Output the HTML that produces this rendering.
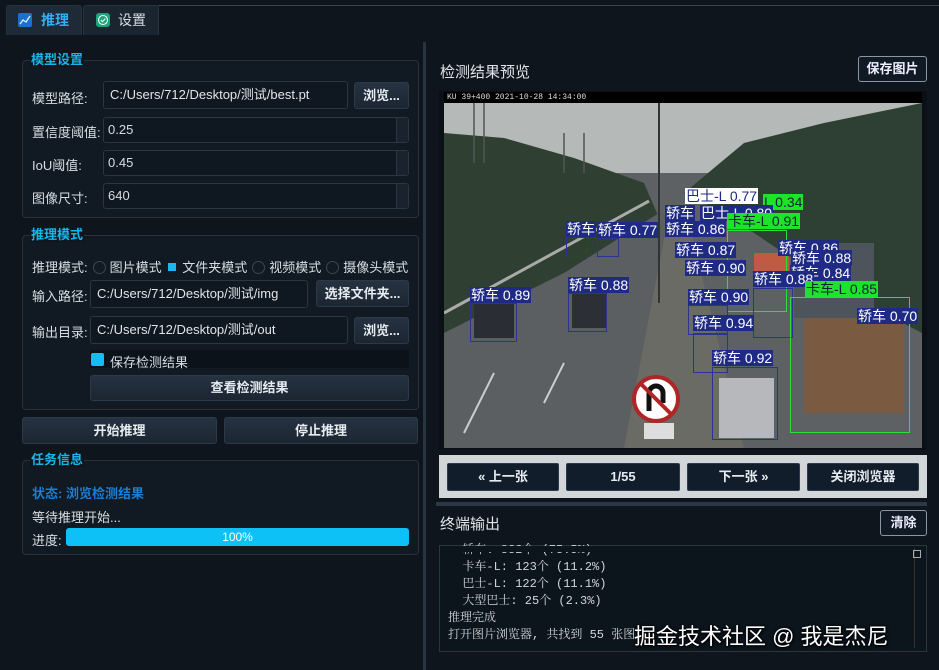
<!DOCTYPE html><html><head><meta charset="utf-8"><style>
*{box-sizing:border-box;margin:0;padding:0}
body{width:939px;height:670px;background:#0e151d;font-family:"Liberation Sans","Noto Sans CJK SC",sans-serif;color:#d6dde4;font-size:13px;position:relative;overflow:hidden}
.a{position:absolute}
.tab{position:absolute;top:5px;height:30px;background:#1b2530;border:1px solid #27323e;border-bottom:none;border-radius:3px 3px 0 0;font-size:14px;line-height:29px}
.grp{position:absolute;left:22px;width:397px;border:1px solid #28323d;border-radius:4px;background:#111a23}
.gt{position:absolute;left:30px;color:#19b5e8;font-weight:bold;font-size:13px;background:#0e151d;padding:0 1px;line-height:14px}
.lbl{position:absolute;font-size:13px;color:#d6dde4}
.inp{position:absolute;background:#0f1720;border:1px solid #2a3642;border-radius:3px;font-size:13px;line-height:26px;padding-left:6px;color:#dfe5ea}
.spin{position:absolute;left:103px;width:306px;height:26px;background:#0f1720;border:1px solid #2a3642;border-radius:3px;font-size:13px;line-height:24px;padding-left:4px}
.spin:after{content:"";position:absolute;right:0;top:0;width:11px;height:100%;background:#1a232d;border-left:1px solid #2a3642}
.btn{position:absolute;background:linear-gradient(#263241,#1c2632);border:1px solid #2c3948;border-radius:3px;text-align:center;font-size:13px;font-weight:bold;color:#e6ebef}
.rad{display:inline-block;width:13px;height:13px;border:1px solid #3a4652;border-radius:50%;vertical-align:-2px;margin:0 4px 0 5px;background:#121a22}
.nb{position:absolute;top:463px;height:28px;background:#121d2b;border:1px solid #2b3a4c;border-radius:2px;color:#e6ebef;font-size:13px;font-weight:bold;text-align:center;line-height:26px}
.L{position:absolute;background:#1f2a85;color:#fff;font-size:14px;line-height:16px;white-space:nowrap;padding:0 1px}
.G{background:#1fe22c;color:#123}
.bx{position:absolute;border:1.5px solid #2a3590}
.gb{position:absolute;border:1.5px solid #25e234}
.term{font-family:"Liberation Mono","Noto Serif CJK SC",monospace;font-size:12px;line-height:17px;color:#cfd6dc}
</style></head><body>
<div class="a" style="left:158px;top:5px;width:781px;height:1px;background:#3b4550"></div>
<div class="tab" style="left:6px;width:76px;background:#1e2a37"><span class="a" style="left:11px;top:7px;width:14px;height:14px;background:#1d6fd0;border-radius:2px"></span><svg class="a" style="left:12px;top:8px" width="12" height="12"><path d="M1 10 L4 6 L7 8 L11 2" stroke="#cfe" stroke-width="1.3" fill="none"/></svg><span class="a" style="left:34px;color:#2fb0f0;font-weight:bold">推理</span></div>
<div class="tab" style="left:83px;width:76px"><span class="a" style="left:12px;top:7px;width:14px;height:14px;background:#1fa37a;border-radius:3px"></span><svg class="a" style="left:13px;top:8px" width="12" height="12"><circle cx="6" cy="6" r="4.5" stroke="#e8fff6" fill="none" stroke-width="1.1"/><path d="M3.8 6 L5.5 7.6 L8.3 4.6" stroke="#e8fff6" fill="none" stroke-width="1.2"/></svg><span class="a" style="left:34px;color:#d6dde4">设置</span></div>
<div class="a" style="left:423px;top:42px;width:3px;height:628px;background:#2a3440"></div>

<div class="grp" style="top:60px;height:158px"></div><div class="gt" style="top:53px">模型设置</div>
<div class="lbl" style="left:32px;top:88px">模型路径:</div>
<div class="inp" style="left:103px;top:81px;width:245px;height:28px">C:/Users/712/Desktop/测试/best.pt</div>
<div class="btn" style="left:354px;top:82px;width:55px;height:27px;line-height:25px">浏览...</div>
<div class="lbl" style="left:32px;top:122px">置信度阈值:</div><div class="spin" style="top:117px">0.25</div>
<div class="lbl" style="left:32px;top:155px">IoU阈值:</div><div class="spin" style="top:150px">0.45</div>
<div class="lbl" style="left:32px;top:188px">图像尺寸:</div><div class="spin" style="top:183px">640</div>

<div class="grp" style="top:235px;height:175px"></div><div class="gt" style="top:228px">推理模式</div>
<div class="lbl" style="left:32px;top:257px;white-space:nowrap">推理模式:<span class="rad"></span>图片模式 <span style="display:inline-block;width:8px;height:8px;background:#1ab8f0;margin:0 6px 1px 3px"></span>文件夹模式<span class="rad"></span>视频模式<span class="rad"></span>摄像头模式</div>
<div class="lbl" style="left:32px;top:286px">输入路径:</div>
<div class="inp" style="left:90px;top:280px;width:218px;height:28px">C:/Users/712/Desktop/测试/img</div>
<div class="btn" style="left:316px;top:280px;width:93px;height:27px;line-height:25px">选择文件夹...</div>
<div class="lbl" style="left:32px;top:322px">输出目录:</div>
<div class="inp" style="left:90px;top:316px;width:258px;height:28px">C:/Users/712/Desktop/测试/out</div>
<div class="btn" style="left:354px;top:317px;width:55px;height:27px;line-height:25px">浏览...</div>
<div class="a" style="left:90px;top:350px;width:319px;height:18px;background:#0c1219"></div>
<div class="a" style="left:91px;top:353px;width:13px;height:13px;background:#16bdf3;border-radius:2px"></div>
<div class="lbl" style="left:110px;top:352px">保存检测结果</div>
<div class="btn" style="left:90px;top:375px;width:319px;height:26px;line-height:24px">查看检测结果</div>

<div class="btn" style="left:22px;top:417px;width:195px;height:27px;line-height:25px">开始推理</div>
<div class="btn" style="left:224px;top:417px;width:194px;height:27px;line-height:25px">停止推理</div>

<div class="grp" style="top:460px;height:95px"></div><div class="gt" style="top:453px">任务信息</div>
<div class="a" style="left:32px;top:483px;color:#1a7fd6;font-weight:bold">状态: 浏览检测结果</div>
<div class="lbl" style="left:32px;top:507px">等待推理开始...</div>
<div class="lbl" style="left:32px;top:530px">进度:</div>
<div class="a" style="left:66px;top:528px;width:343px;height:18px;background:#0dc0f5;border-radius:3px;text-align:center;color:#fff;font-size:12px;line-height:18px">100%</div>

<div class="a" style="left:440px;top:61px;font-size:15px;color:#dfe5ea">检测结果预览</div>
<div class="a" style="left:858px;top:56px;width:69px;height:26px;border:1px solid #8a96a3;border-radius:3px;background:#101a25;font-weight:bold;text-align:center;line-height:24px;color:#eef">保存图片</div>
<div class="a" style="left:439px;top:91px;width:488px;height:359px;background:#0b1016"></div>
<div class="a" style="left:444px;top:92px;width:478px;height:11px;background:#000;color:#ddd;font-family:'Liberation Mono',monospace;font-size:8px;line-height:11px;padding-left:3px">KU 39+400 2021-10-28 14:34:00</div>
<svg class="a" style="left:444px;top:103px" width="478" height="345">
<rect width="478" height="345" fill="#5d6163"/>
<rect width="478" height="70" fill="#b5b9b8"/>
<polygon points="0,30 60,35 130,55 200,80 215,115 120,170 0,230" fill="#2f3f31"/>
<polygon points="240,90 300,40 380,20 478,0 478,230 420,200 340,150 280,110" fill="#2e4034"/>
<polygon points="0,230 120,170 215,110 225,110 180,345 0,345" fill="#5b5f62"/>
<polygon points="225,110 240,100 300,345 180,345" fill="#6a6b64"/>
<line x1="215" y1="0" x2="215" y2="200" stroke="#333" stroke-width="2"/>
<line x1="0" y1="210" x2="205" y2="98" stroke="#aaa" stroke-width="3"/>
<path d="M30 0 v60 M40 0 v60 M120 30 v40 M140 30 v40" stroke="#555" stroke-width="1.5"/>
<path d="M20 330 l30 -60 M100 300 l20 -40" stroke="#ccc" stroke-width="2"/>
<circle cx="212" cy="296" r="22" fill="#fff" stroke="#b02525" stroke-width="4"/>
<path d="M205 308 V290 a7 7 0 0 1 14 0 V300" stroke="#111" stroke-width="5" fill="none"/>
<line x1="196" y1="280" x2="228" y2="312" stroke="#b02525" stroke-width="4"/>
<rect x="200" y="320" width="30" height="16" fill="#ddd"/>
<rect x="360" y="210" width="100" height="100" fill="#7a5a40"/>
<rect x="350" y="140" width="80" height="75" fill="#4d545c"/>
<rect x="30" y="200" width="40" height="35" fill="#2a2d33"/>
<rect x="128" y="190" width="35" height="35" fill="#2c2f35"/>
<rect x="275" y="275" width="55" height="60" fill="#b6b8bb"/>
<rect x="310" y="150" width="35" height="30" fill="#c05a40"/>
</svg>
<div class="bx" style="left:470px;top:303px;width:47px;height:39px"></div><div class="L" style="left:470px;top:287px">轿车 0.89</div>
<div class="bx" style="left:568px;top:293px;width:39px;height:39px"></div><div class="L" style="left:568px;top:277px">轿车 0.88</div>
<div class="bx" style="left:566px;top:237px;width:22px;height:21px"></div><div class="L" style="left:566px;top:221px">轿车</div>
<div class="bx" style="left:597px;top:238px;width:22px;height:19px"></div><div class="L" style="left:597px;top:222px">轿车 0.77</div>
<div class="L" style="left:665px;top:205px">轿车</div>
<div class="L" style="left:685px;top:188px;background:#fff;color:#1f2a85">巴士-L 0.77</div>
<div class="L G" style="left:763px;top:194px">L 0.34</div>
<div class="L" style="left:700px;top:205px">巴士-L 0.80</div>
<div class="L" style="left:665px;top:221px">轿车 0.86</div>
<div class="gb" style="left:727px;top:230px;width:60px;height:82px"></div><div class="L G" style="left:727px;top:213px">卡车-L 0.91</div>
<div class="L" style="left:675px;top:242px">轿车 0.87</div>
<div class="L" style="left:778px;top:240px">轿车 0.86</div>
<div class="L" style="left:791px;top:250px">轿车 0.88</div>
<div class="L" style="left:685px;top:260px">轿车 0.90</div>
<div class="L" style="left:790px;top:265px">轿车 0.84</div>
<div class="bx" style="left:753px;top:288px;width:40px;height:50px"></div><div class="L" style="left:753px;top:271px">轿车 0.88</div>
<div class="gb" style="left:790px;top:297px;width:120px;height:136px"></div><div class="L G" style="left:805px;top:281px">卡车-L 0.85</div>
<div class="bx" style="left:688px;top:305px;width:40px;height:30px"></div><div class="L" style="left:688px;top:289px">轿车 0.90</div>
<div class="bx" style="left:693px;top:333px;width:35px;height:40px"></div><div class="L" style="left:693px;top:315px">轿车 0.94</div>
<div class="bx" style="left:712px;top:367px;width:66px;height:73px"></div><div class="L" style="left:712px;top:350px">轿车 0.92</div>
<div class="L" style="left:857px;top:308px">轿车 0.70</div>

<div class="a" style="left:439px;top:455px;width:488px;height:43px;background:#d3d6d9"></div>
<div class="nb" style="left:447px;width:112px">« 上一张</div>
<div class="nb" style="left:566px;width:114px">1/55</div>
<div class="nb" style="left:687px;width:113px">下一张 »</div>
<div class="nb" style="left:807px;width:112px">关闭浏览器</div>
<div class="a" style="left:436px;top:502px;width:491px;height:4px;background:#2b3846"></div>
<div class="a" style="left:440px;top:513px;font-size:15px;color:#dfe5ea">终端输出</div>
<div class="a" style="left:880px;top:510px;width:47px;height:26px;border:1px solid #8a96a3;border-radius:3px;background:#101a25;font-weight:bold;text-align:center;line-height:24px;color:#eef">清除</div>
<div class="a" style="left:439px;top:545px;width:488px;height:107px;border:1px solid #2a3642;background:#0c141c;overflow:hidden"></div>
<div class="a" style="left:914px;top:548px;width:8px;height:100px;border-left:1px solid #333"></div>
<div class="a" style="left:913px;top:550px;width:8px;height:8px;border:1px solid #aaa"></div>
<div class="a term" style="left:448px;top:542px;white-space:pre">  轿车: 832个 (75.5%)
  卡车-L: 123个 (11.2%)
  巴士-L: 122个 (11.1%)
  大型巴士: 25个 (2.3%)
推理完成
打开图片浏览器, 共找到 55 张图</div>
<div class="a" style="left:440px;top:546px;width:470px;height:6px;background:#0c141c"></div>
<div class="a" style="left:634px;top:619px;font-size:22px;color:#fff;text-shadow:0 0 3px #000,1px 1px 2px #000;white-space:nowrap">掘金技术社区 @ 我是杰尼</div>
</body></html>
